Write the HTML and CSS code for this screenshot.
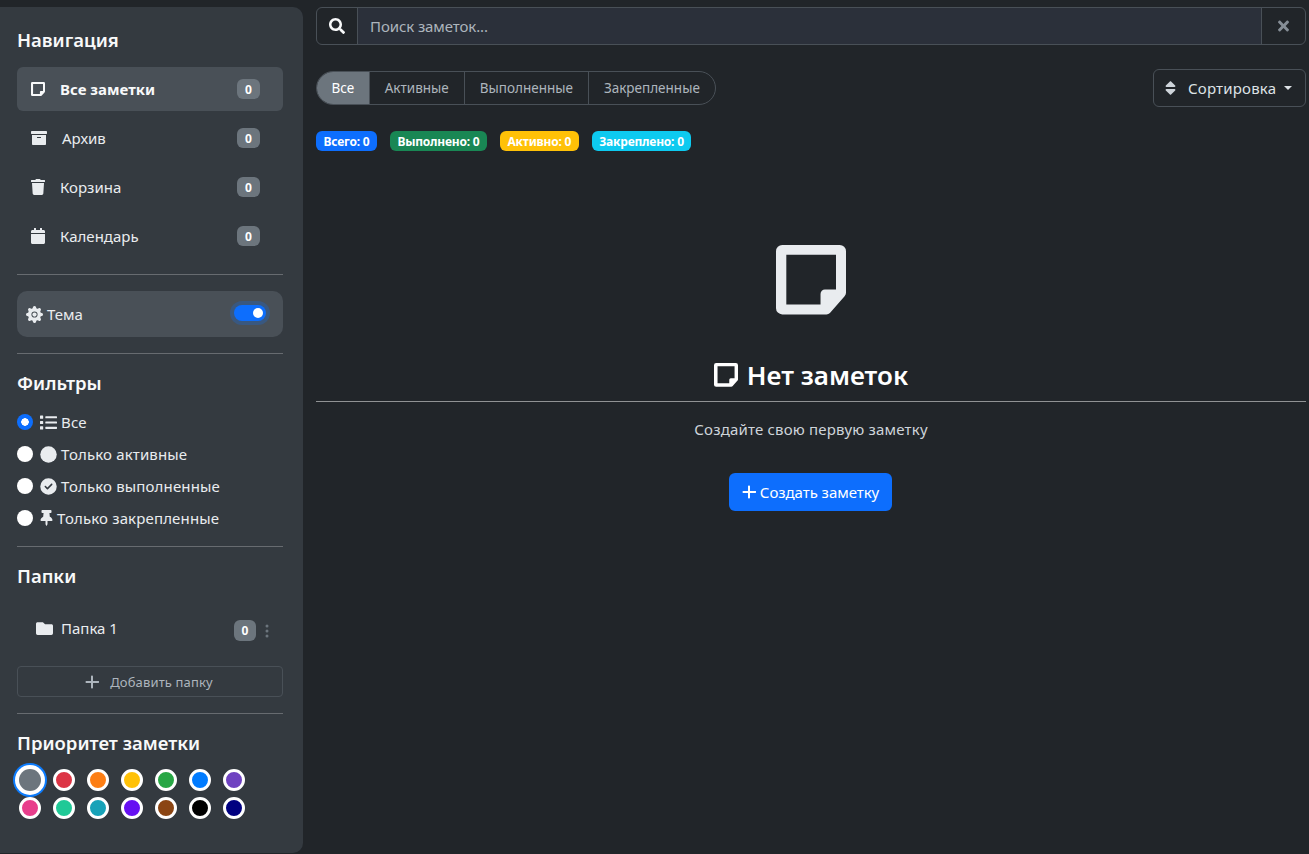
FILE: index.html
```html
<!DOCTYPE html>
<html lang="ru">
<head>
    <meta charset="UTF-8">
    <meta name="viewport" content="width=device-width, initial-scale=1.0">
    <title>Заметки</title>
    <link rel="stylesheet" href="styles.css">
</head>
<body>
    <svg class="icon-defs" xmlns="http://www.w3.org/2000/svg">
        <symbol id="i-note" viewBox="0 0 448 512"><path fill-rule="evenodd" d="M40 32H408a40 40 0 0 1 40 40V338a32 32 0 0 1-9 22L345 467a32 32 0 0 1-22 9H40a40 40 0 0 1-40-40V72a40 40 0 0 1 40-40zM66 94V412H285V345a28 28 0 0 1 28-28H384V94z"/></symbol>
        <symbol id="i-archive" viewBox="0 0 512 512"><path d="M32 448c0 17.7 14.3 32 32 32h384c17.7 0 32-14.3 32-32V160H32v288zm160-212c0-6.6 5.4-12 12-12h104c6.6 0 12 5.4 12 12v8c0 6.6-5.4 12-12 12H204c-6.6 0-12-5.4-12-12v-8zM480 32H32C14.3 32 0 46.3 0 64v48c0 8.8 7.2 16 16 16h480c8.8 0 16-7.2 16-16V64c0-17.7-14.3-32-32-32z"/></symbol>
        <symbol id="i-trash" viewBox="0 0 448 512"><path d="M432 32H312l-9.4-18.7A24 24 0 0 0 281.1 0H166.8a23.72 23.72 0 0 0-21.4 13.3L136 32H16A16 16 0 0 0 0 48v32a16 16 0 0 0 16 16h416a16 16 0 0 0 16-16V48a16 16 0 0 0-16-16zM53.2 467a48 48 0 0 0 47.9 45h245.8a48 48 0 0 0 47.9-45L416 128H32z"/></symbol>
        <symbol id="i-calendar" viewBox="0 0 448 512"><path d="M12 192h424c6.6 0 12 5.4 12 12v260c0 26.5-21.5 48-48 48H48c-26.5 0-48-21.5-48-48V204c0-6.6 5.4-12 12-12zm436-44v-36c0-26.5-21.5-48-48-48h-48V12c0-6.6-5.4-12-12-12h-40c-6.6 0-12 5.4-12 12v52H160V12c0-6.6-5.4-12-12-12h-40c-6.6 0-12 5.4-12 12v52H48C21.5 64 0 85.5 0 112v36c0 6.6 5.4 12 12 12h424c6.6 0 12-5.4 12-12z"/></symbol>
        <symbol id="i-gear" viewBox="0 0 16 16"><path d="M9.405 1.05c-.413-1.4-2.397-1.4-2.81 0l-.1.34a1.464 1.464 0 0 1-2.105.872l-.31-.17c-1.283-.698-2.686.705-1.987 1.987l.169.311c.446.82.023 1.841-.872 2.105l-.34.1c-1.4.413-1.4 2.397 0 2.81l.34.1a1.464 1.464 0 0 1 .872 2.105l-.17.31c-.698 1.283.705 2.686 1.987 1.987l.311-.169a1.464 1.464 0 0 1 2.105.872l.1.34c.413 1.4 2.397 1.4 2.81 0l.1-.34a1.464 1.464 0 0 1 2.105-.872l.31.17c1.283.698 2.686-.705 1.987-1.987l-.169-.311a1.464 1.464 0 0 1 .872-2.105l.34-.1c1.4-.413 1.4-2.397 0-2.81l-.34-.1a1.464 1.464 0 0 1-.872-2.105l.17-.31c.698-1.283-.705-2.686-1.987-1.987l-.311.169a1.464 1.464 0 0 1-2.105-.872l-.1-.34zM8 10.93a2.929 2.929 0 1 1 0-5.86 2.929 2.929 0 0 1 0 5.858z"/><circle cx="8" cy="8" r="2"/></symbol>
        <symbol id="i-list" viewBox="0 0 512 512"><path d="M80 368H16a16 16 0 0 0-16 16v64a16 16 0 0 0 16 16h64a16 16 0 0 0 16-16v-64a16 16 0 0 0-16-16zm0-320H16A16 16 0 0 0 0 64v64a16 16 0 0 0 16 16h64a16 16 0 0 0 16-16V64a16 16 0 0 0-16-16zm0 160H16a16 16 0 0 0-16 16v64a16 16 0 0 0 16 16h64a16 16 0 0 0 16-16v-64a16 16 0 0 0-16-16zm416 176H176a16 16 0 0 0-16 16v32a16 16 0 0 0 16 16h320a16 16 0 0 0 16-16v-32a16 16 0 0 0-16-16zm0-320H176a16 16 0 0 0-16 16v32a16 16 0 0 0 16 16h320a16 16 0 0 0 16-16V80a16 16 0 0 0-16-16zm0 160H176a16 16 0 0 0-16 16v32a16 16 0 0 0 16 16h320a16 16 0 0 0 16-16v-32a16 16 0 0 0-16-16z"/></symbol>
        <symbol id="i-circle" viewBox="0 0 512 512"><circle cx="256" cy="256" r="248"/></symbol>
        <symbol id="i-check" viewBox="0 0 512 512"><path d="M256 504A248 248 0 1 0 256 8a248 248 0 1 0 0 496zM369 209L241 337c-9.4 9.4-24.6 9.4-33.9 0l-64-64c-9.4-9.4-9.4-24.6 0-33.9s24.6-9.4 33.9 0l47 47L335 175c9.4-9.4 24.6-9.4 33.9 0s9.4 24.6 0 33.9z"/></symbol>
        <symbol id="i-pin" viewBox="0 0 384 512"><path d="M298.028 214.267L285.793 96H328c13.255 0 24-10.745 24-24V24c0-13.255-10.745-24-24-24H56C42.745 0 32 10.745 32 24v48c0 13.255 10.745 24 24 24h42.207L85.972 214.267C37.465 236.82 0 277.261 0 328c0 13.255 10.745 24 24 24h136v104.007c0 1.242.289 2.467.845 3.578l24 48c2.941 5.882 11.364 5.893 14.311 0l24-48a8.008 8.008 0 0 0 .845-3.578V352h136c13.255 0 24-10.745 24-24-.001-51.183-37.983-91.42-85.973-113.733z"/></symbol>
        <symbol id="i-folder" viewBox="0 0 512 512"><path d="M464 128H272l-64-64H48C21.49 64 0 85.49 0 112v288c0 26.51 21.49 48 48 48h416c26.51 0 48-21.49 48-48V176c0-26.51-21.49-48-48-48z"/></symbol>
        <symbol id="i-plus" viewBox="0 0 448 512"><path d="M256 80c0-17.7-14.3-32-32-32s-32 14.3-32 32V224H48c-17.7 0-32 14.3-32 32s14.3 32 32 32H192V432c0 17.7 14.3 32 32 32s32-14.3 32-32V288H432c17.7 0 32-14.3 32-32s-14.3-32-32-32H256V80z"/></symbol>
        <symbol id="i-search" viewBox="0 0 512 512"><path d="M505 442.7L405.3 343c-4.5-4.5-10.6-7-17-7H372c27.6-35.3 44-79.7 44-128C416 93.1 322.9 0 208 0S0 93.1 0 208s93.1 208 208 208c48.3 0 92.7-16.4 128-44v16.3c0 6.4 2.5 12.5 7 17l99.7 99.7c9.4 9.4 24.6 9.4 33.9 0l28.3-28.3c9.4-9.4 9.4-24.6.1-34zM208 336c-70.7 0-128-57.2-128-128 0-70.7 57.2-128 128-128 70.7 0 128 57.2 128 128 0 70.7-57.2 128-128 128z"/></symbol>
        <symbol id="i-xmark" viewBox="0 0 352 512"><path d="M242.72 256l100.07-100.07c12.28-12.28 12.28-32.19 0-44.48l-22.24-22.24c-12.28-12.28-32.19-12.28-44.48 0L176 189.28 75.93 89.21c-12.28-12.28-32.19-12.28-44.48 0L9.21 111.45c-12.28 12.28-12.28 32.19 0 44.48L109.28 256 9.21 356.07c-12.28 12.28-12.28 32.19 0 44.48l22.24 22.24c12.28 12.28 32.2 12.28 44.48 0L176 322.72l100.07 100.07c12.28 12.28 32.2 12.28 44.48 0l22.24-22.24c12.28-12.28 12.28-32.19 0-44.48L242.72 256z"/></symbol>
        <symbol id="i-sort" viewBox="0 0 320 512"><path d="M41 288h238c21.4 0 32.1 25.9 17 41L177 448c-9.4 9.4-24.6 9.4-33.9 0L24 329c-15.1-15.1-4.4-41 17-41zm255-105L177 64c-9.4-9.4-24.6-9.4-33.9 0L24 183c-15.1 15.1-4.4 41 17 41h238c21.4 0 32.1-25.9 17-41z"/></symbol>
        <symbol id="i-dots" viewBox="0 0 8 16"><circle cx="4" cy="3" r="1.5"/><circle cx="4" cy="8" r="1.5"/><circle cx="4" cy="13" r="1.5"/></symbol>
    </svg>

    <aside class="sidebar">
        <h5 class="side-title">Навигация</h5>
        <nav class="nav-list">
            <a class="nav-item active"><svg class="ico ico-n"><use href="#i-note"/></svg><span class="nav-label">Все заметки</span><span class="count">0</span></a>
            <a class="nav-item"><svg class="ico ico-w"><use href="#i-archive"/></svg><span class="nav-label">Архив</span><span class="count">0</span></a>
            <a class="nav-item"><svg class="ico ico-n"><use href="#i-trash"/></svg><span class="nav-label">Корзина</span><span class="count">0</span></a>
            <a class="nav-item"><svg class="ico ico-n"><use href="#i-calendar"/></svg><span class="nav-label">Календарь</span><span class="count">0</span></a>
        </nav>
        <hr class="rule">
        <div class="theme-box">
            <svg class="ico ico-w"><use href="#i-gear"/></svg>
            <span class="theme-label">Тема</span>
            <span class="toggle"><span class="toggle-thumb"></span></span>
        </div>
        <hr class="rule">
        <h5 class="side-title">Фильтры</h5>
        <div class="filter-list">
            <label class="filter-row"><input type="radio" name="filter" checked><svg class="ico ico-w"><use href="#i-list"/></svg><span>Все</span></label>
            <label class="filter-row"><input type="radio" name="filter"><svg class="ico ico-w"><use href="#i-circle"/></svg><span>Только активные</span></label>
            <label class="filter-row"><input type="radio" name="filter"><svg class="ico ico-w"><use href="#i-check"/></svg><span>Только выполненные</span></label>
            <label class="filter-row"><input type="radio" name="filter"><svg class="ico ico-s"><use href="#i-pin"/></svg><span>Только закрепленные</span></label>
        </div>
        <hr class="rule rule-tight">
        <h5 class="side-title">Папки</h5>
        <div class="folder-row">
            <svg class="ico ico-w"><use href="#i-folder"/></svg>
            <span class="folder-name">Папка 1</span>
            <span class="count count-folder">0</span>
            <svg class="folder-dots"><use href="#i-dots"/></svg>
        </div>
        <button class="add-folder" type="button"><svg class="ico ico-n"><use href="#i-plus"/></svg>Добавить папку</button>
        <hr class="rule">
        <h5 class="side-title">Приоритет заметки</h5>
        <div class="color-grid">
            <span class="dot selected c-gray"></span>
            <span class="dot c-red"></span>
            <span class="dot c-orange"></span>
            <span class="dot c-yellow"></span>
            <span class="dot c-green"></span>
            <span class="dot c-blue"></span>
            <span class="dot c-violet"></span>
            <span class="dot c-pink"></span>
            <span class="dot c-teal"></span>
            <span class="dot c-cyan"></span>
            <span class="dot c-indigo"></span>
            <span class="dot c-brown"></span>
            <span class="dot c-black"></span>
            <span class="dot c-navy"></span>
        </div>
    </aside>

    <main class="content">
        <div class="search-group">
            <span class="search-addon"><svg class="ico ico-w"><use href="#i-search"/></svg></span>
            <input class="search-input" type="text" placeholder="Поиск заметок...">
            <span class="search-clear"><svg class="ico ico-x"><use href="#i-xmark"/></svg></span>
        </div>

        <div class="toolbar">
            <div class="pill-group">
                <button class="pill on" type="button">Все</button>
                <button class="pill" type="button">Активные</button>
                <button class="pill" type="button">Выполненные</button>
                <button class="pill" type="button">Закрепленные</button>
            </div>
            <button class="sort-btn" type="button"><svg class="ico ico-sort"><use href="#i-sort"/></svg>Сортировка<span class="caret"></span></button>
        </div>

        <div class="stats">
            <span class="stat s-blue">Всего: 0</span>
            <span class="stat s-green">Выполнено: 0</span>
            <span class="stat s-yellow">Активно: 0</span>
            <span class="stat s-cyan">Закреплено: 0</span>
        </div>

        <section class="empty">
            <svg class="empty-icon"><use href="#i-note"/></svg>
            <h3 class="empty-title"><svg class="title-icon"><use href="#i-note"/></svg>Нет заметок</h3>
            <hr class="empty-rule">
            <p class="empty-text">Создайте свою первую заметку</p>
            <button class="create-btn" type="button"><svg class="ico ico-n"><use href="#i-plus"/></svg>Создать заметку</button>
        </section>
    </main>
</body>
</html>
```

FILE: styles.css
```css
* {
    box-sizing: border-box;
}

body {
    margin: 0;
    height: 854px;
    overflow: hidden;
    padding-top: 7px;
    display: flex;
    font-family: "Noto Sans", "Open Sans", Arial, sans-serif;
    font-size: 15px;
    background-color: #212529;
    color: #dee2e6;
}

.icon-defs {
    display: none;
}

.ico {
    height: 16px;
    fill: currentColor;
    flex: none;
}

.ico-n { width: 14px; }
.ico-w { width: 16px; }
.ico-s { width: 12px; }
.ico-x { width: 11px; height: 16px; }
.ico-sort { width: 11px; height: 18px; }

/* sidebar */
.sidebar {
    width: 303px;
    height: 846px;
    flex: none;
    padding: 21px 20px 0 17px;
    background-color: #343a40;
    border-radius: 0 10px 10px 0;
}

.side-title {
    margin: 0;
    font-size: 18.5px;
    font-weight: 600;
    line-height: 24px;
    color: #f8f9fa;
}

.nav-list {
    margin-top: 15px;
    display: flex;
    flex-direction: column;
    gap: 5px;
}

.nav-item {
    height: 44px;
    display: flex;
    align-items: center;
    gap: 15px;
    padding: 0 23px 0 14px;
    border-radius: 6px;
    color: #e9ecef;
}

.nav-item.active {
    background-color: #495057;
    color: #f8f9fa;
}

.nav-item.active .nav-label {
    font-weight: 700;
}

.nav-label {
    flex: 1;
}

.count {
    width: 23px;
    height: 20px;
    display: flex;
    align-items: center;
    justify-content: center;
    border-radius: 6px;
    background-color: #6c757d;
    color: #fff;
    font-size: 12px;
    font-weight: 700;
}

.rule {
    margin: 16px 0;
    border: 0;
    border-top: 1px solid rgba(255, 255, 255, 0.25);
}

.theme-box {
    height: 46px;
    display: flex;
    align-items: center;
    gap: 4px;
    padding: 0 17px 0 9px;
    border-radius: 10px;
    background-color: #495057;
    color: #e9ecef;
}

.theme-box .ico {
    width: 17px;
    height: 17px;
}

.theme-label {
    flex: 1;
}

.toggle {
    width: 32px;
    height: 16px;
    display: flex;
    justify-content: flex-end;
    align-items: center;
    padding: 0 3px;
    margin-top: -2px;
    border-radius: 8px;
    background-color: #0d6efd;
    box-shadow: 0 0 0 4px rgba(13, 110, 253, 0.25);
}

.toggle-thumb {
    width: 10px;
    height: 10px;
    border-radius: 50%;
    background-color: #fff;
}

.rule + .side-title {
    margin-top: 17px;
}

.filter-list {
    margin-top: 11px;
}

.filter-row {
    height: 32px;
    display: flex;
    align-items: center;
    gap: 4px;
    color: #e9ecef;
    letter-spacing: 0.15px;
}

.filter-row input {
    appearance: none;
    width: 16px;
    height: 16px;
    margin: 0 3px 0 0;
    flex: none;
    border-radius: 50%;
    background-color: #fff;
}

.filter-row input:checked {
    background: radial-gradient(circle, #fff 0 3.5px, #0d6efd 4px);
}

.filter-row .ico-w {
    width: 17px;
    height: 17px;
}

.filter-row .ico-s {
    width: 13px;
}

.rule-tight {
    margin: 12px 0 0;
}

.rule-tight + .side-title {
    margin-top: 17px;
}

.folder-row {
    height: 44px;
    margin-top: 18px;
    display: flex;
    align-items: center;
    padding-left: 19px;
    color: #e9ecef;
}

.folder-row .ico {
    width: 17px;
    height: 17px;
}

.folder-name {
    flex: 1;
    margin-left: 8px;
}

.count-folder {
    width: 22px;
    height: 21px;
    margin-top: 5px;
}

.folder-dots {
    width: 8px;
    height: 16px;
    margin: 5px 12px 0 7px;
    fill: #6c757d;
}

.add-folder {
    width: 100%;
    height: 31px;
    margin-top: 16px;
    display: flex;
    align-items: center;
    justify-content: center;
    gap: 11px;
    padding: 0 2px 0 0;
    border: 1px solid #495057;
    border-radius: 4px;
    background: none;
    color: #adb5bd;
    font: inherit;
    font-size: 13px;
    letter-spacing: 0.15px;
}

.color-grid {
    margin-top: 14px;
    padding-left: 2px;
    display: grid;
    grid-template-columns: repeat(7, 22px);
    gap: 6px 12px;
}

.dot {
    width: 22px;
    height: 22px;
    border-radius: 50%;
    border: 3px solid #fff;
}

.dot.selected {
    border: 0;
    box-shadow: 0 0 0 4px #fff, 0 0 0 6px #0d7cfd;
}

.c-gray { background-color: #6c757d; }
.c-red { background-color: #dc3545; }
.c-orange { background-color: #fd7e14; }
.c-yellow { background-color: #ffc107; }
.c-green { background-color: #28a745; }
.c-blue { background-color: #007bff; }
.c-violet { background-color: #6f42c1; }
.c-pink { background-color: #e83e8c; }
.c-teal { background-color: #20c997; }
.c-cyan { background-color: #17a2b8; }
.c-indigo { background-color: #6610f2; }
.c-brown { background-color: #8b4513; }
.c-black { background-color: #000; }
.c-navy { background-color: #000080; }

/* main area */
.content {
    flex: 1;
    min-width: 0;
    padding: 0 3px 0 13px;
}

.search-group {
    height: 38px;
    display: flex;
    border: 1px solid #495057;
    border-radius: 6px;
    overflow: hidden;
}

.search-addon {
    width: 40px;
    display: flex;
    align-items: center;
    justify-content: center;
    color: #f8f9fa;
}

.search-input {
    flex: 1;
    min-width: 0;
    padding: 0 12px;
    border: 0;
    border-left: 1px solid #495057;
    border-right: 1px solid #495057;
    background-color: #2b303a;
    font: inherit;
    letter-spacing: -0.1px;
    color: #dee2e6;
    outline: none;
}

.search-input::placeholder {
    color: #adb5bd;
    opacity: 1;
}

.search-clear {
    width: 43px;
    display: flex;
    align-items: center;
    justify-content: center;
    color: #868e96;
}

.toolbar {
    height: 38px;
    margin-top: 24px;
    display: flex;
    align-items: center;
    justify-content: space-between;
}

.pill-group {
    height: 34px;
    display: flex;
    border: 1px solid #495057;
    border-radius: 17px;
    overflow: hidden;
}

.pill {
    padding: 0 15px;
    border: 0;
    border-left: 1px solid #495057;
    background: none;
    color: #adb5bd;
    font: inherit;
    font-size: 13.5px;
}

.pill:first-child {
    padding: 0 14.5px;
    border-left: 0;
}

.pill.on {
    background-color: #6c757d;
    color: #fff;
}

.sort-btn {
    width: 153px;
    height: 38px;
    display: flex;
    align-items: center;
    padding: 0 0 0 11px;
    border: 1px solid #495057;
    border-radius: 6px;
    background: none;
    color: #dee2e6;
    font: inherit;
    letter-spacing: 0.2px;
}

.sort-btn .ico {
    margin-right: 12px;
    color: #ced4da;
}

.caret {
    width: 0;
    height: 0;
    margin-left: 8px;
    border-top: 4px solid currentColor;
    border-left: 4px solid transparent;
    border-right: 4px solid transparent;
}

.stats {
    margin-top: 24px;
    display: flex;
    gap: 13px;
}

.stat {
    height: 20px;
    display: flex;
    align-items: center;
    padding: 0 7.5px;
    border-radius: 6px;
    color: #fff;
    font-size: 12px;
    font-weight: 700;
    letter-spacing: -0.2px;
}

.s-blue { background-color: #0d6efd; }
.s-green { background-color: #198754; }
.s-yellow { background-color: #ffc107; }
.s-cyan { background-color: #0dcaf0; }

.empty {
    margin-top: 89px;
    display: flex;
    flex-direction: column;
    align-items: center;
}

.empty-icon {
    width: 70px;
    height: 80px;
    fill: #e9ecef;
}

.empty-title {
    margin: 38px 0 0;
    display: flex;
    align-items: center;
    gap: 9px;
    font-size: 26px;
    font-weight: 600;
    line-height: 34px;
    color: #fff;
}

.title-icon {
    width: 24px;
    height: 28px;
    fill: #fff;
}

.empty-rule {
    width: 100%;
    margin: 9px 0 0;
    border: 0;
    border-top: 1px solid rgba(255, 255, 255, 0.5);
}

.empty-text {
    margin: 15px 0 0;
    line-height: 24px;
    color: #ced4da;
    letter-spacing: 0.18px;
}

.create-btn {
    width: 163px;
    height: 38px;
    margin: 32px 1px 0 0;
    display: flex;
    align-items: center;
    justify-content: center;
    gap: 4px;
    padding: 0;
    border: 0;
    border-radius: 6px;
    background-color: #0d6efd;
    color: #fff;
    font: inherit;
    letter-spacing: -0.05px;
}
```
